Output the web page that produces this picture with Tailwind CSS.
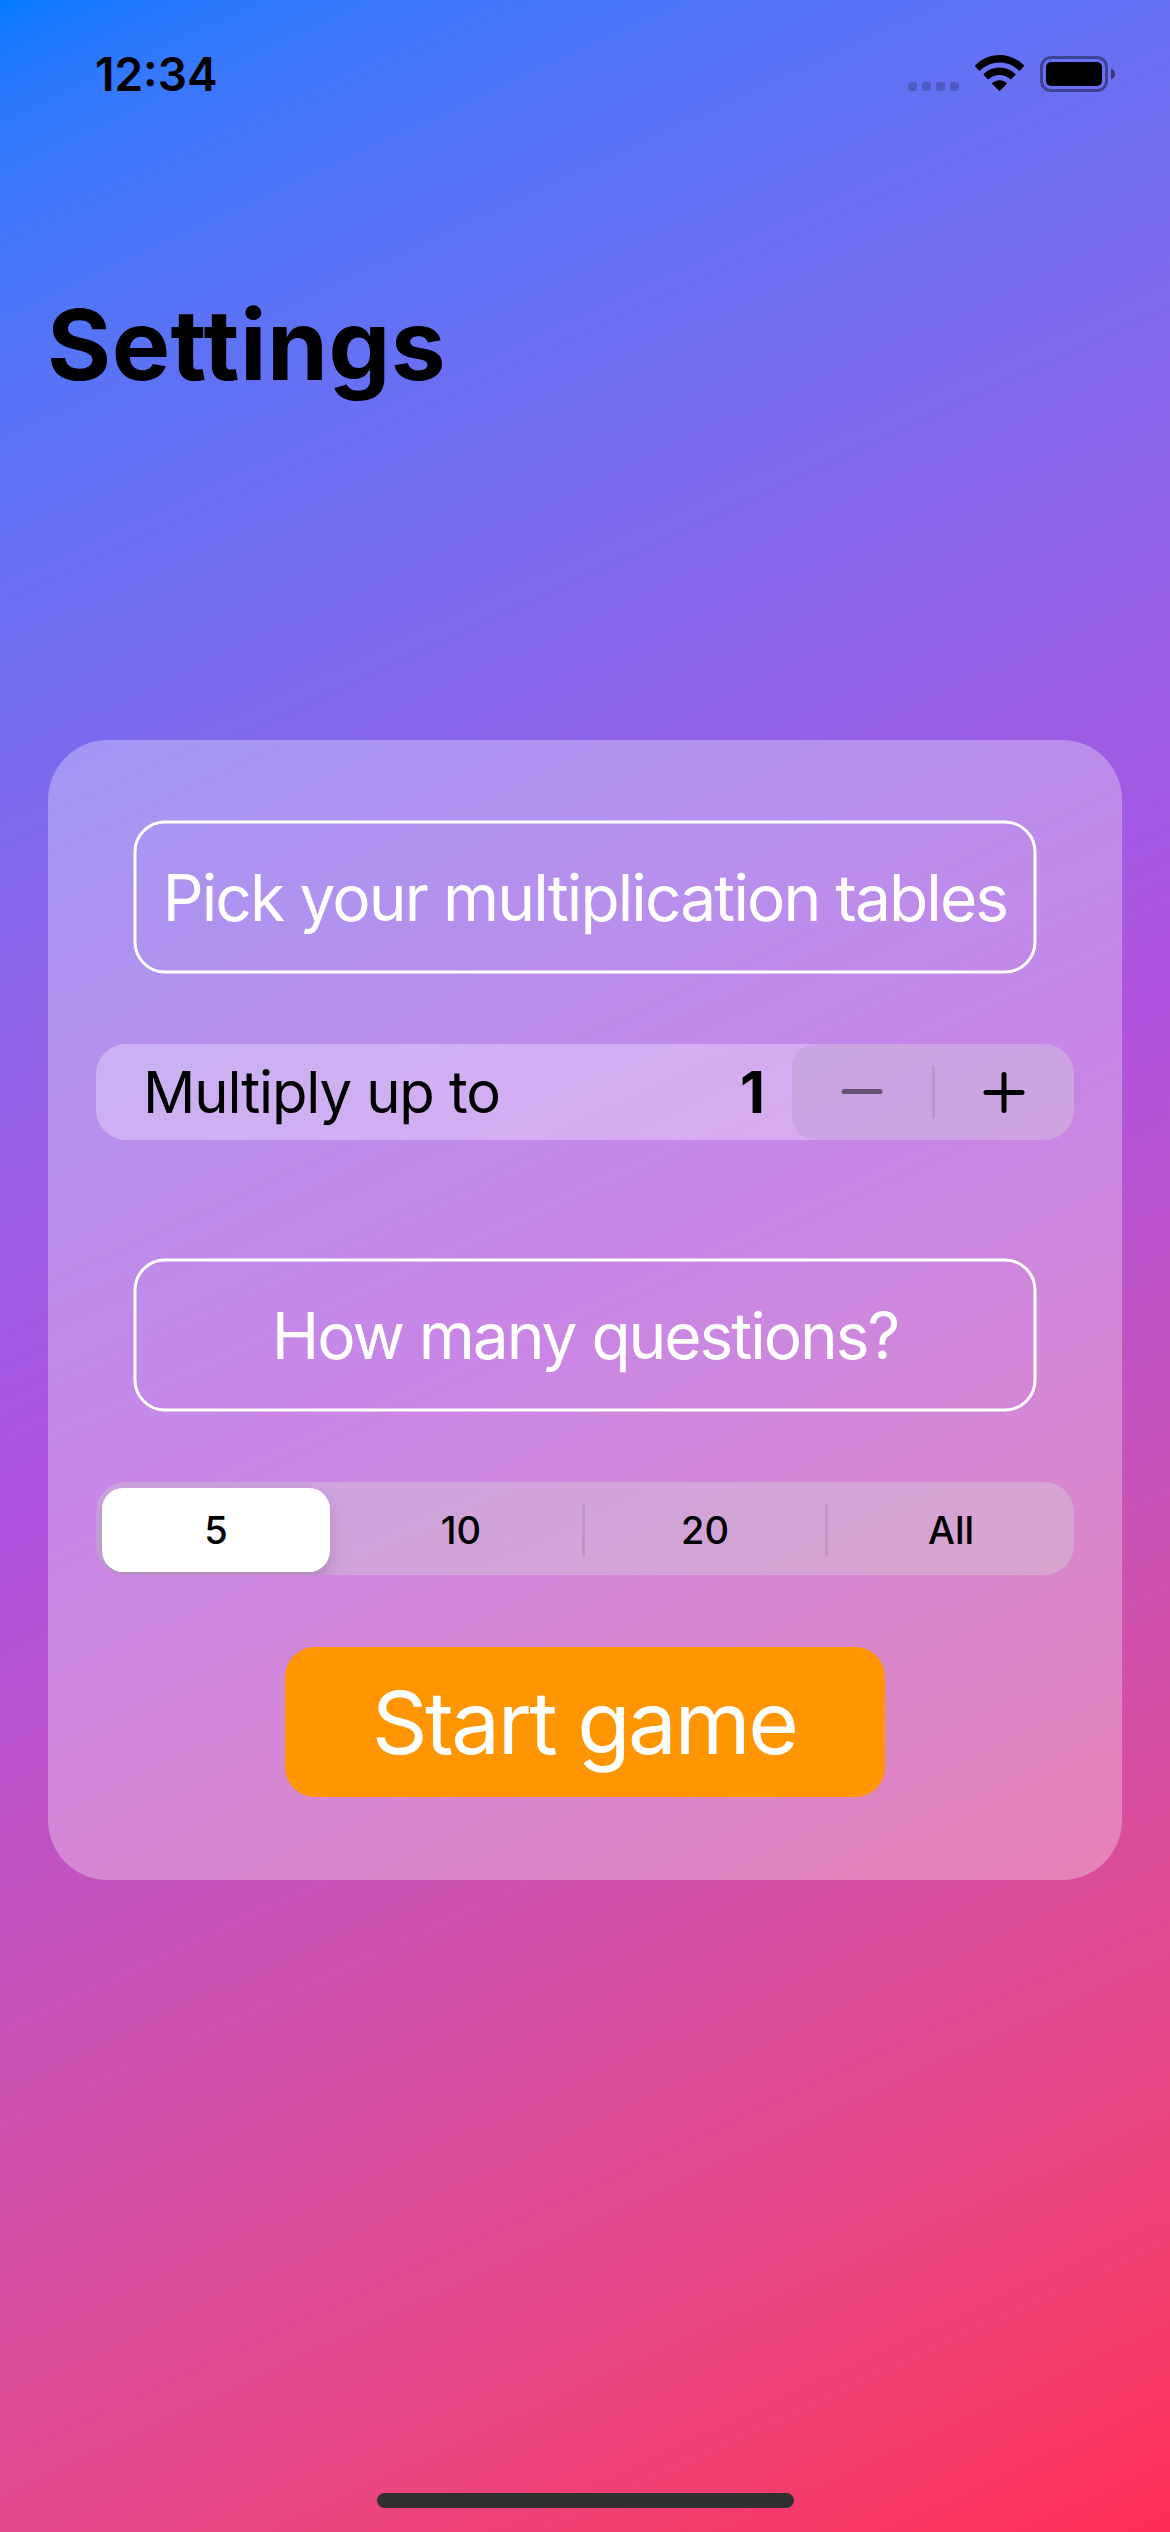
<!DOCTYPE html>
<html lang="en">
<head>
<meta charset="utf-8">
<title>Settings</title>
<script src="https://cdn.jsdelivr.net/npm/@tailwindcss/browser@4"></script>
</head>
<body class="bg-[#af52de]">
<div class="flex h-[2532px] w-[1170px] flex-col overflow-hidden bg-[linear-gradient(155.2deg_in_oklab,#007aff,#af52de,#ff2d55)] font-[Inter,sans-serif] text-black">

  <!-- Status bar -->
  <header class="flex h-[141px] shrink-0 items-start justify-between pr-[55px] pl-[95px]">
    <span class="mt-[46px] text-[46px] leading-[56px] font-semibold">12:34</span>
    <div class="mt-[55px] flex items-start">
      <div class="mt-[27px] flex gap-[5px]">
        <span class="size-[9px] rounded-[3px] bg-black/20"></span>
        <span class="size-[9px] rounded-[3px] bg-black/20"></span>
        <span class="size-[9px] rounded-[3px] bg-black/20"></span>
        <span class="size-[9px] rounded-[3px] bg-black/20"></span>
      </div>
      <svg class="ml-[16px] h-[36px] w-[49px]" viewBox="0 0 49 36">
        <path d="M0.3 11.4Q-0.3 10.7 0.4 10C7.1 3.6 15.400 0 24.500 0C33.600 0 41.900 3.600 48.600 10Q49.300 10.700 48.700 11.400L45 15.400Q44.400 16 43.700 15.400C38.400 10.400 31.700 7.600 24.500 7.600C17.300 7.600 10.600 10.400 5.300 15.400Q4.600 16 4 15.400Z"/>
        <path d="M8.800 20Q8.200 19.300 8.900 18.700C13.200 14.800 18.600 12.600 24.500 12.600C30.400 12.600 35.800 14.800 40.100 18.700Q40.800 19.300 40.200 20L36.400 24Q35.800 24.600 35.100 24C32.200 21.500 28.500 20.100 24.500 20.100C20.500 20.100 16.800 21.500 13.900 24Q13.200 24.600 12.600 24Z"/>
        <path d="M17.300 28.900Q16.800 28.300 17.500 27.700C19.500 26.100 21.900 25.200 24.500 25.200C27.100 25.200 29.500 26.100 31.500 27.700Q32.200 28.300 31.700 28.900L25.200 35.600Q24.500 36.200 23.800 35.600Z"/>
      </svg>
      <svg class="mt-[1px] ml-[16px] h-[36px] w-[75px]" viewBox="0 0 75 36">
        <rect x="1.500" y="1.500" width="65" height="33" rx="9.500" fill="none" stroke="#000" stroke-opacity=".4" stroke-width="3"/>
        <rect x="6" y="6" width="56" height="24" rx="5" />
        <path d="M71 12.500C73.500 13.500 75 15.500 75 18C75 20.500 73.500 22.500 71 23.500Z" fill-opacity=".5"/>
      </svg>
    </div>
  </header>

  <h1 class="mt-[144px] pl-[47px] text-[98px] leading-[120px] font-bold tracking-[0.5px]">Settings</h1>

  <main class="mx-[48px] mt-[335px] flex h-[1140px] flex-col rounded-[60px] bg-white/30 px-[48px] pt-[80px]">
    <h2 class="relative mx-auto flex h-[154px] w-[904px] items-center justify-center pt-[2px] text-white">
      <svg class="absolute inset-0" width="904" height="154"><rect x="2" y="2" width="900" height="150" rx="30" fill="none" stroke="#fff" stroke-width="3"/></svg>
      <span class="text-[64px] leading-[78px] tracking-[-1.88px] whitespace-nowrap">Pick your multiplication tables</span>
    </h2>

    <!-- Stepper row -->
    <section class="mt-[70px] flex h-[96px] items-center overflow-hidden rounded-[30px] bg-white/30">
      <span class="pl-[47px] text-[58px] leading-[70px] tracking-[-1.13px]">Multiply up to</span>
      <span class="mr-[27px] ml-auto text-[58px] leading-[70px] font-bold">1</span>
      <div class="flex h-full w-[282px] items-center rounded-[24px] bg-[rgb(118_118_128/0.12)]">
        <button class="flex h-full flex-1 items-center justify-center" aria-label="Decrease">
          <svg class="h-[42px] w-[42px]" viewBox="0 0 42 42"><path d="M3 20.500H39" stroke="#000" stroke-opacity=".5" stroke-width="5" stroke-linecap="round"/></svg>
        </button>
        <span class="h-[54px] w-[3px] rounded-full bg-[rgb(60_60_80/0.13)]"></span>
        <button class="flex h-full flex-1 items-center justify-center" aria-label="Increase">
          <svg class="h-[42px] w-[42px]" viewBox="0 0 42 42"><path d="M3 21.500H39M21 3.500V39.500" stroke="#000" stroke-width="5" stroke-linecap="round"/></svg>
        </button>
      </div>
    </section>

    <h2 class="relative mx-auto mt-[118px] flex h-[154px] w-[904px] items-center justify-center pt-[2px] text-white">
      <svg class="absolute inset-0" width="904" height="154"><rect x="2" y="2" width="900" height="150" rx="30" fill="none" stroke="#fff" stroke-width="3"/></svg>
      <span class="text-[64px] leading-[78px] tracking-[-2.05px] whitespace-nowrap">How many questions?</span>
    </h2>

    <!-- Segmented control -->
    <section class="mt-[70px] flex h-[93px] items-center overflow-hidden rounded-[30px] bg-white/30 bg-[linear-gradient(rgb(118_118_128/0.12),rgb(118_118_128/0.12))] pt-[3px] pl-[6px] text-[38px] leading-[46px] font-[450]">
      <button class="flex h-[84px] w-[228px] items-center justify-center rounded-[21px] bg-white font-medium shadow-[0_9px_24px_rgb(0_0_0/0.12),0_9px_3px_rgb(0_0_0/0.04)]">5</button>
      <button class="ml-[10px] w-[242px] text-center">10</button>
      <span class="h-[54px] w-[3px] rounded-full bg-[rgb(60_60_80/0.13)]"></span>
      <button class="w-[240px] text-center">20</button>
      <span class="h-[54px] w-[3px] rounded-full bg-[rgb(60_60_80/0.13)]"></span>
      <button class="flex-1 text-center">All</button>
    </section>

    <button class="mx-auto mt-[72px] flex h-[150px] w-[600px] items-center justify-center rounded-[30px] bg-[#ff9500] pt-[2px] pr-[2px] text-[87px] leading-[106px] tracking-[-2.5px] whitespace-nowrap text-white">Start game</button>
  </main>

  <!-- Home indicator -->
  <div class="mx-auto mt-auto mb-[24px] h-[15px] w-[417px] rounded-full bg-[#303030]"></div>
</div>
</body>
</html>
